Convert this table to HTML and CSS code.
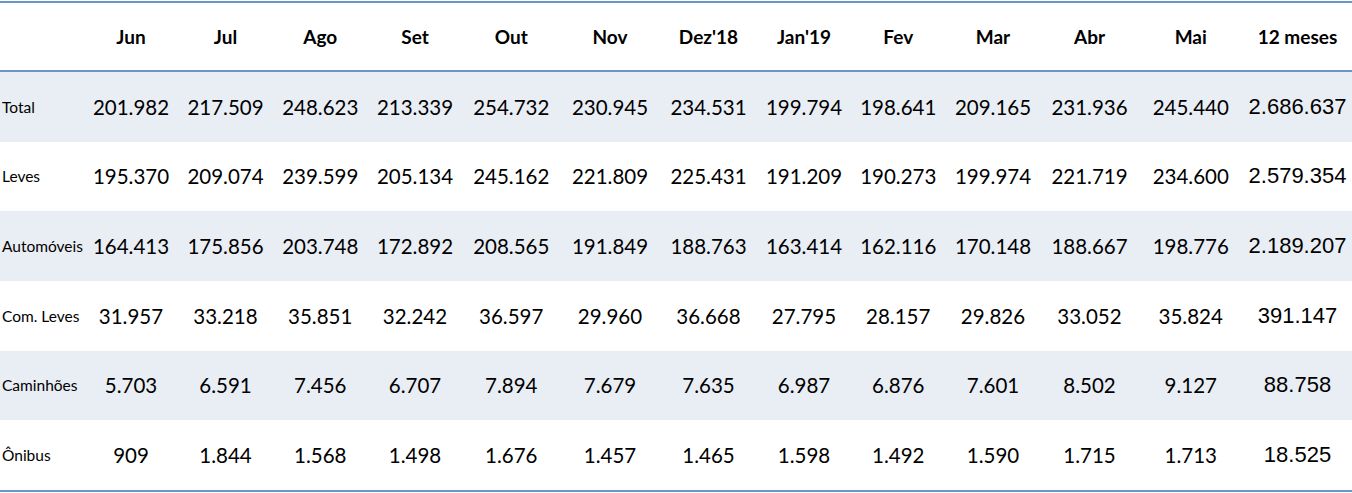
FILE: index.html
```html
<!DOCTYPE html>
<html lang="pt">
<head>
<meta charset="utf-8">
<title>Vendas</title>
<link rel="stylesheet" href="styles.css">
</head>
<body>
<div class="table">
  <div class="row head">
    <div class="lbl"></div>
    <div>Jun</div><div>Jul</div><div>Ago</div><div>Set</div><div>Out</div><div>Nov</div><div>Dez'18</div><div>Jan'19</div><div>Fev</div><div>Mar</div><div>Abr</div><div>Mai</div><div>12 meses</div>
  </div>
  <div class="row shade">
    <div class="lbl">Total</div>
    <div>201.982</div><div>217.509</div><div>248.623</div><div>213.339</div><div>254.732</div><div>230.945</div><div>234.531</div><div>199.794</div><div>198.641</div><div>209.165</div><div>231.936</div><div>245.440</div><div class="sum">2.686.637</div>
  </div>
  <div class="row">
    <div class="lbl">Leves</div>
    <div>195.370</div><div>209.074</div><div>239.599</div><div>205.134</div><div>245.162</div><div>221.809</div><div>225.431</div><div>191.209</div><div>190.273</div><div>199.974</div><div>221.719</div><div>234.600</div><div class="sum">2.579.354</div>
  </div>
  <div class="row shade">
    <div class="lbl">Automóveis</div>
    <div>164.413</div><div>175.856</div><div>203.748</div><div>172.892</div><div>208.565</div><div>191.849</div><div>188.763</div><div>163.414</div><div>162.116</div><div>170.148</div><div>188.667</div><div>198.776</div><div class="sum">2.189.207</div>
  </div>
  <div class="row">
    <div class="lbl">Com. Leves</div>
    <div>31.957</div><div>33.218</div><div>35.851</div><div>32.242</div><div>36.597</div><div>29.960</div><div>36.668</div><div>27.795</div><div>28.157</div><div>29.826</div><div>33.052</div><div>35.824</div><div class="sum">391.147</div>
  </div>
  <div class="row shade">
    <div class="lbl">Caminhões</div>
    <div>5.703</div><div>6.591</div><div>7.456</div><div>6.707</div><div>7.894</div><div>7.679</div><div>7.635</div><div>6.987</div><div>6.876</div><div>7.601</div><div>8.502</div><div>9.127</div><div class="sum">88.758</div>
  </div>
  <div class="row">
    <div class="lbl">Ônibus</div>
    <div>909</div><div>1.844</div><div>1.568</div><div>1.498</div><div>1.676</div><div>1.457</div><div>1.465</div><div>1.598</div><div>1.492</div><div>1.590</div><div>1.715</div><div>1.713</div><div class="sum">18.525</div>
  </div>
</div>
</body>
</html>
```

FILE: styles.css
```css
html, body {
  margin: 0;
  padding: 0;
  background: #ffffff;
}
body {
  font-family: Lato, "Open Sans", sans-serif;
  color: #000;
}
.table {
  width: 1352px;
  margin-top: 1px;
  border-top: 2px solid #6a95cb;
  border-bottom: 2px solid #6a95cb;
}
.row {
  display: grid;
  grid-template-columns: 84px 94px 95px 94.5px 95px 97.5px 100px 97px 94px 94.5px 95px 98px 104.5px 109px;
  height: 69.67px;
  align-items: center;
  font-size: 20.5px;
}
.row > div {
  text-align: center;
  white-space: nowrap;
}
.row > .lbl {
  text-align: left;
  padding-left: 2px;
  font-size: 15.5px;
}
.head {
  height: 67px;
  font-weight: 700;
  font-size: 19px;
  border-bottom: 2px solid #6a95cb;
}
.shade {
  background: #e9edf4;
}
.row > .sum {
  font-family: "Liberation Sans", Arial, sans-serif;
  font-size: 22px;
}
```
